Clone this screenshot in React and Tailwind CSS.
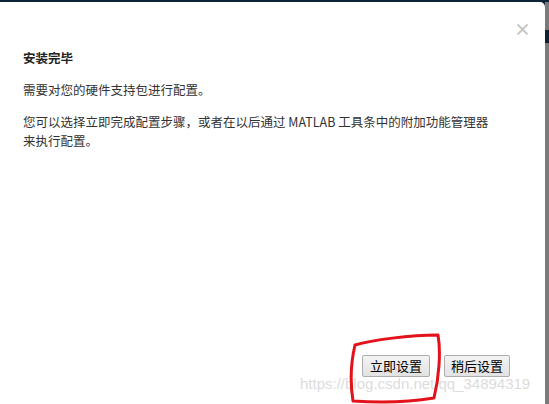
export default function App() {
  const font = { fontFamily: '"Noto Sans CJK SC", "Noto Sans", sans-serif' }
  return (
    <div className="relative w-[549px] h-[404px] overflow-hidden bg-[#0c2236] flex flex-col" style={font}>
      {/* top window strip */}
      <div className="h-[2px] flex-shrink-0" />
      <div className="flex flex-1">
        {/* Dialog */}
        <div className="flex-1 bg-white rounded-tr-[5px] flex flex-col">
          <div className="flex justify-end pt-[19px] pr-[14px]">
            <span className="text-[17px] leading-[16px] text-[#c4c4c4] font-bold">×</span>
          </div>
          <div className="pl-[23px] pr-[47px] text-[12.5px] leading-[19px] text-[#333]">
            <p className="mt-[11px] font-bold text-[#222]">安装完毕</p>
            <p className="mt-[13px]">需要对您的硬件支持包进行配置。</p>
            <p className="mt-[13px]">您可以选择立即完成配置步骤，或者在以后通过 MATLAB 工具条中的附加功能管理器来执行配置。</p>
          </div>
          <div className="flex-1" />
          <div className="flex justify-end gap-[14px] pr-[35px] pb-[27px]">
            <button className="h-[22px] w-[68px] border border-[#adadad] rounded-[2px] bg-gradient-to-b from-[#f4f4f4] to-[#e2e2e2] text-[13px] leading-[20px] text-black">立即设置</button>
            <button className="h-[22px] w-[66px] border border-[#adadad] rounded-[2px] bg-gradient-to-b from-[#f4f4f4] to-[#e2e2e2] text-[13px] leading-[20px] text-black">稍后设置</button>
          </div>
        </div>
        {/* right edge of background window */}
        <div className="w-[4px] flex flex-col bg-[#7a7a7a]">
          <div className="h-[28px]" />
          <div className="h-[13px] bg-[#0c2236]" />
        </div>
      </div>

      {/* watermark */}
      <span
        className="absolute left-[300px] top-[375px] text-[15px] leading-[18px] text-[#dcdcdc] whitespace-nowrap"
        style={{ fontFamily: '"Liberation Sans", Arial, sans-serif' }}
      >
        https://blog.csdn.net/qq_34894319
      </span>

      {/* hand-drawn red mark */}
      <svg className="absolute inset-0 pointer-events-none" width="549" height="404" viewBox="0 0 549 404">
        <path
          d="M355 345 C372 340 410 335 438 335 C441 352 439 378 434 398 C410 402 380 403 353 401 C350 382 351 362 355 345"
          fill="none"
          stroke="#e3121b"
          strokeWidth="3"
          strokeLinecap="round"
          strokeLinejoin="round"
        />
      </svg>
    </div>
  )
}
